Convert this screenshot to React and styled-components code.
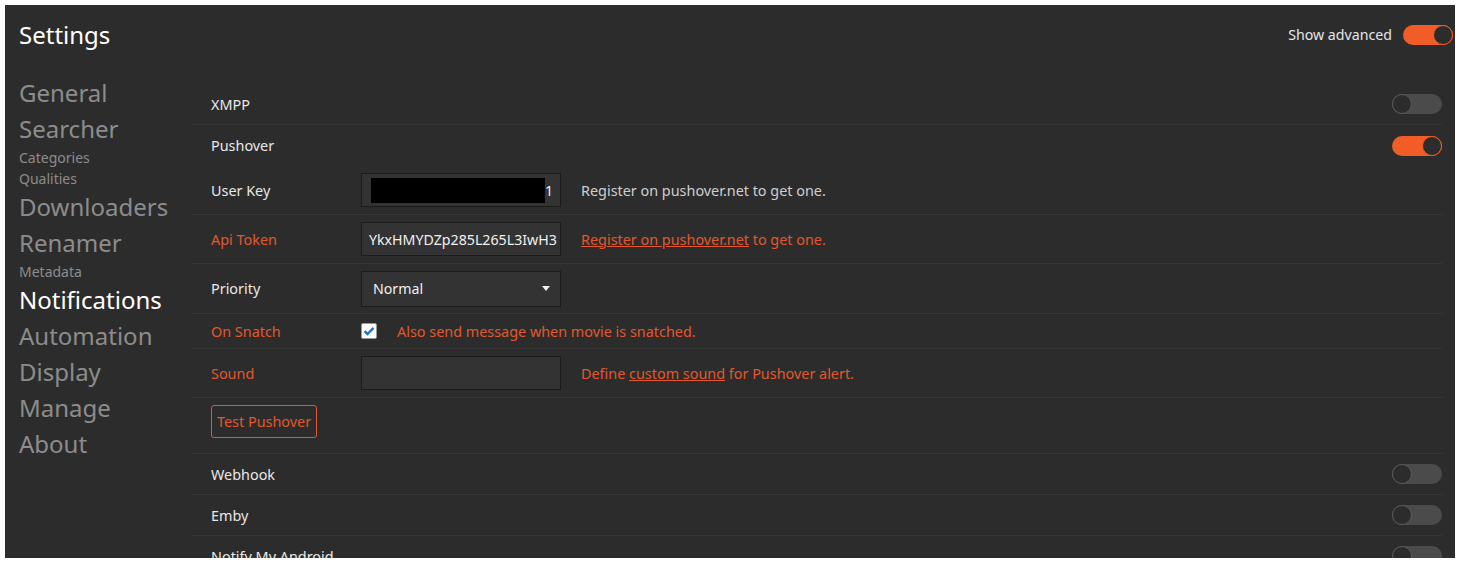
import React, { useState } from "react";
import styled, { createGlobalStyle } from "styled-components";

const GlobalStyle = createGlobalStyle`
  body {
    margin: 5px;
    background: #ffffff;
    font-family: "Noto Sans", "Open Sans", sans-serif;
  }
`;

const ORANGE = "#f25c26";
const ORANGE_TEXT = "#e2582c";
const TEXT_SIZE = "14.4px";

const Panel = styled.div`
  background: #2c2c2c;
  height: 553px;
  overflow: hidden;
  display: flex;
  flex-direction: column;
`;

const Header = styled.div`
  height: 60px;
  display: flex;
  align-items: center;
  justify-content: space-between;
  padding: 0 2px 0 14px;
  box-sizing: border-box;
  flex-shrink: 0;
`;

const Title = styled.h1`
  margin: 0 0 1px;
  font-size: 24px;
  font-weight: 400;
  color: #ffffff;
`;

const Advanced = styled.label`
  display: flex;
  align-items: center;
  gap: 11px;
  font-size: 14.2px;
  color: #e6e6e6;
  margin-bottom: 1px;
`;

const Body = styled.div`
  display: grid;
  grid-template-columns: 186px 1fr;
  padding-right: 13px;
`;

const Sidebar = styled.nav`
  padding: 10px 0 0 14px;
  display: flex;
  flex-direction: column;
`;

const NavItem = styled.a`
  font-size: 24px;
  line-height: 36px;
  color: ${({ $active }) => ($active ? "#ffffff" : "#8c8c8c")};
  white-space: nowrap;
`;

const SubItem = styled.a`
  font-size: 14px;
  line-height: 21px;
  color: #8c8c8c;
`;

const Content = styled.div`
  padding-top: 19px;
`;

const Row = styled.div`
  display: flex;
  align-items: ${({ $top }) => ($top ? "flex-start" : "center")};
  height: ${({ $h }) => $h}px;
  padding-left: 20px;
  padding-top: ${({ $top }) => $top || 0}px;
  box-sizing: content-box;
  border-bottom: ${({ $plain }) => ($plain ? "none" : "1px solid #363636")};
  font-size: ${TEXT_SIZE};
`;

const Label = styled.div`
  width: 150px;
  flex-shrink: 0;
  color: ${({ $warn }) => ($warn ? ORANGE_TEXT : "#e8e8e8")};
`;

const Name = styled.div`
  flex: 1;
  color: #e8e8e8;
`;

const Field = styled.div`
  width: 200px;
  height: ${({ $h }) => $h || 34}px;
  box-sizing: border-box;
  background: #333333;
  border: 1px solid #1b1b1b;
  display: flex;
  align-items: center;
  justify-content: space-between;
  padding: 0 7px 0 ${({ $pl }) => $pl || 7}px;
  color: #f0f0f0;
  font-size: 14.2px;
  white-space: nowrap;
  overflow: hidden;
`;

const Redacted = styled.span`
  width: 178px;
  height: 25px;
  background: #000;
  margin-left: 2px;
`;

const Hint = styled.div`
  margin-left: 20px;
  color: ${({ $warn }) => ($warn ? ORANGE_TEXT : "#cfcfcf")};

  a {
    color: inherit;
    text-decoration: underline;
  }
`;

const Caret = styled.span`
  width: 0;
  height: 0;
  border-left: 4px solid transparent;
  border-right: 4px solid transparent;
  border-top: 5px solid #f0f0f0;
  margin-right: 3px;
`;

const Check = styled.span`
  width: 16px;
  height: 16px;
  box-sizing: border-box;
  border-radius: 2px;
  background: #ffffff;
  border: 1px solid #9a9a9a;
  display: flex;
  align-items: center;
  justify-content: center;
`;

const Button = styled.button`
  height: 33px;
  padding: 0 5px;
  background: transparent;
  border: 1px solid ${ORANGE_TEXT};
  border-radius: 3px;
  color: ${ORANGE_TEXT};
  font-family: inherit;
  font-size: ${TEXT_SIZE};
`;

const Track = styled.span`
  position: relative;
  display: inline-block;
  width: 50px;
  height: 20px;
  border-radius: 10px;
  flex-shrink: 0;
  background: ${({ $on }) => ($on ? ORANGE : "#4b4b4b")};

  &::after {
    content: "";
    position: absolute;
    top: 0;
    ${({ $on }) => ($on ? "right: 0;" : "left: 0;")}
    width: 20px;
    height: 20px;
    box-sizing: border-box;
    border-radius: 50%;
    background: #2c2c2c;
    border: 1px solid ${({ $on }) => ($on ? ORANGE : "#5a5a5a")};
  }
`;

const Toggle = ({ on, onChange }) => (
  <Track $on={on} onClick={() => onChange && onChange(!on)} />
);

const navItems = [
  { label: "General" },
  { label: "Searcher", subs: ["Categories", "Qualities"] },
  { label: "Downloaders" },
  { label: "Renamer", subs: ["Metadata"] },
  { label: "Notifications", active: true },
  { label: "Automation" },
  { label: "Display" },
  { label: "Manage" },
  { label: "About" },
];

function ServiceRow({ name, on, h = 40, plain }) {
  const [enabled, setEnabled] = useState(on);
  return (
    <Row $h={h} $plain={plain}>
      <Name>{name}</Name>
      <Toggle on={enabled} onChange={setEnabled} />
    </Row>
  );
}

export default function App() {
  const [advanced, setAdvanced] = useState(true);

  return (
    <>
      <GlobalStyle />
      <Panel>
        <Header>
          <Title>Settings</Title>
          <Advanced>
            Show advanced
            <Toggle on={advanced} onChange={setAdvanced} />
          </Advanced>
        </Header>
        <Body>
          <Sidebar>
            {navItems.map((item) => (
              <React.Fragment key={item.label}>
                <NavItem $active={item.active}>{item.label}</NavItem>
                {(item.subs || []).map((s) => (
                  <SubItem key={s}>{s}</SubItem>
                ))}
              </React.Fragment>
            ))}
          </Sidebar>
          <Content>
            <ServiceRow name="XMPP" on={false} />
            <ServiceRow name="Pushover" on={true} h={41} plain />

            <Row $h={48}>
              <Label>User Key</Label>
              <Field>
                <Redacted />
                1
              </Field>
              <Hint>Register on pushover.net to get one.</Hint>
            </Row>

            <Row $h={48}>
              <Label $warn>Api Token</Label>
              <Field>YkxHMYDZp285L265L3IwH3</Field>
              <Hint $warn>
                <a>Register on pushover.net</a> to get one.
              </Hint>
            </Row>

            <Row $h={49}>
              <Label>Priority</Label>
              <Field $h={36} $pl={11}>
                Normal
                <Caret />
              </Field>
            </Row>

            <Row $h={34}>
              <Label $warn>On Snatch</Label>
              <Check>
                <svg width="12" height="10" viewBox="0 0 12 10">
                  <path
                    d="M1.5 5.2 L4.5 8 L10.5 1.8"
                    fill="none"
                    stroke="#1d78c4"
                    strokeWidth="2.4"
                  />
                </svg>
              </Check>
              <Hint $warn>Also send message when movie is snatched.</Hint>
            </Row>

            <Row $h={48}>
              <Label $warn>Sound</Label>
              <Field />
              <Hint $warn>
                Define <a>custom sound</a> for Pushover alert.
              </Hint>
            </Row>

            <Row $h={48} $top={7}>
              <Button>Test Pushover</Button>
            </Row>

            <ServiceRow name="Webhook" on={false} />
            <ServiceRow name="Emby" on={false} />
            <ServiceRow name="Notify My Android" on={false} />
          </Content>
        </Body>
      </Panel>
    </>
  );
}
